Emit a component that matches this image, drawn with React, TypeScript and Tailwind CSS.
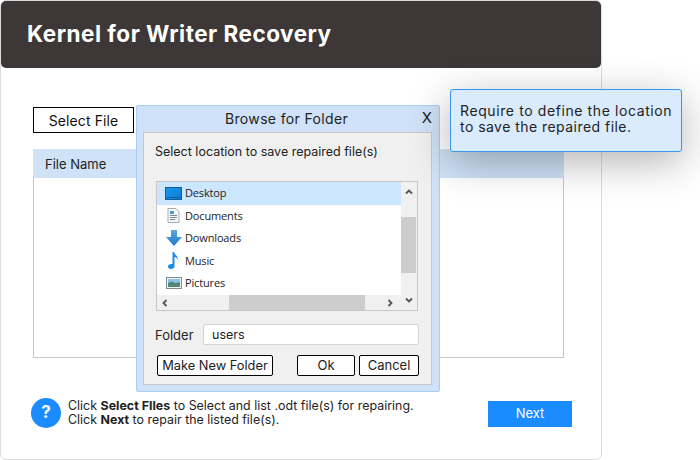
const font = { fontFamily: '"Inter", "Open Sans", sans-serif' };

function Row({ icon, label, active }: { icon: React.ReactNode; label: string; active?: boolean }) {
  return (
    <div className={`h-[22.5px] flex items-center pl-[7px] gap-[2px] ${active ? "bg-[#cde6ff]" : ""}`}>
      <span className="w-[19px] h-[18px] flex items-center justify-center shrink-0">{icon}</span>
      <span className="text-[11px] font-medium text-[#222] font-['Open_Sans',sans-serif] tracking-[-0.15px]">{label}</span>
    </div>
  );
}

const DesktopIcon = (
  <svg width="17" height="13" viewBox="0 0 17 13">
    <defs>
      <linearGradient id="dk" x1="0" y1="0" x2="1" y2="1">
        <stop offset="0" stopColor="#1b97ef" />
        <stop offset="1" stopColor="#0f78cf" />
      </linearGradient>
    </defs>
    <rect x="0.5" y="0.5" width="16" height="12" fill="url(#dk)" stroke="#0f5f9f" />
    <rect x="2" y="10" width="13" height="1" fill="#0c5c9c" />
  </svg>
);
const DocIcon = (
  <svg width="13" height="15" viewBox="0 0 13 15">
    <path d="M1 .5h8l3 3v11H1z" fill="#f4f6f8" stroke="#a3aeb8" />
    <rect x="3" y="3" width="4" height="3" fill="#4a9ad8" />
    <path d="M3 7.500h7M3 9.500h7M3 11.500h5" stroke="#7d8892" />
  </svg>
);
const DownIcon = (
  <svg width="16" height="16" viewBox="0 0 16 16">
    <defs>
      <linearGradient id="dn" x1="0" y1="0" x2="0" y2="1">
        <stop offset="0" stopColor="#5aa9e6" />
        <stop offset="1" stopColor="#1f78cc" />
      </linearGradient>
    </defs>
    <path d="M5 0h6v7h5l-8 9-8-9h5z" fill="url(#dn)" />
  </svg>
);
const MusicIcon = (
  <svg width="11" height="17" viewBox="0 0 11 17">
    <path d="M4.500 0h1.600c.3 3 4.400 3.600 3.600 8-.5-2-1.900-2.800-3.200-3v9c0 1.800-1.600 3-3.500 3C1.200 17 0 16 0 14.600c0-1.600 1.600-2.700 3.200-2.700.5 0 .9.100 1.300.2z" fill="#1b8be8" />
  </svg>
);
const PicIcon = (
  <svg width="16" height="12" viewBox="0 0 16 12">
    <rect x="0.500" y="0.500" width="15" height="11" fill="#eef2f5" stroke="#7f8b95" />
    <rect x="2" y="2" width="12" height="4" fill="#8cc3e8" />
    <path d="M2 6l4-1.500 3 1.500 5-1v5H2z" fill="#4f8a78" />
  </svg>
);

function Chevron({ d }: { d: "up" | "down" | "left" | "right" }) {
  const v = d === "up" || d === "down";
  const path = { up: "M1 6l4-4 4 4", down: "M1 2l4 4 4-4", left: "M6 1L2 5l4 4", right: "M2 1l4 4-4 4" }[d];
  return (
    <svg width={v ? 8 : 6} height={v ? 6 : 8} viewBox={v ? "0 0 10 8" : "0 0 8 10"}>
      <path d={path} fill="none" stroke="#555" strokeWidth="2.4" />
    </svg>
  );
}

export default function App() {
  return (
    <div className="w-[700px] h-[460px] bg-white relative overflow-hidden" style={font}>
      <div className="w-[602px] h-[460px] border border-[#dcdcdc] rounded-[6px] flex flex-col">
        <div className="h-[67px] bg-[#3d3837] rounded-[5px] flex items-center pl-[26px] shrink-0">
          <h1 className="text-[22.5px] font-bold text-white tracking-[0.5px] mb-[2px]">Kernel for Writer Recovery</h1>
        </div>
        <div className="pl-[32px] pt-[39px] flex flex-col items-start">
          <button className="w-[101px] h-[26px] border border-black bg-white text-[14px] text-[#111] tracking-[0.1px]">Select File</button>
          <div className="mt-[16px] w-[531px] h-[209px] border border-[#c4c8ce] border-t-0">
            <div className="h-[29px] bg-[#cfe2f7] flex items-center pl-[12px] text-[13px] text-[#222] ml-[-1px] mr-[-1px] pt-[2px]">File Name</div>
          </div>
          <div className="w-[541px] ml-[-2px] mt-[40px] flex items-center justify-between">
            <div className="flex items-center gap-[7px]">
              <div className="w-[30px] h-[30px] rounded-full bg-[#1a8cff] text-white font-bold text-[17px] flex items-center justify-center">?</div>
              <div className="text-[12.4px] leading-[14px] text-[#222] tracking-[0.02px]">
                <div>Click <b>Select FIles</b> to Select and list .odt file(s) for repairing.</div>
                <div className="tracking-[0.02px]">Click <b>Next</b> to repair the listed file(s).</div>
              </div>
            </div>
            <button className="w-[84px] h-[26px] bg-[#1a8cff] text-white text-[13px] mt-[2px]">Next</button>
          </div>
        </div>
      </div>

      {/* Browse dialog */}
      <div className="absolute left-[136px] top-[105px] w-[304px] h-[287px] bg-[#cfe2f7] border border-[#a9cdf0] rounded-[2px] flex flex-col">
        <div className="h-[26px] flex items-center relative shrink-0">
          <span className="w-full text-center text-[14px] text-[#222] pr-[3px] tracking-[0.35px] mb-[2px]">Browse for Folder</span>
          <span className="absolute right-[7px] top-[1px] text-[15px] text-[#222]">X</span>
        </div>
        <div className="mx-[6px] w-[289px] h-[253px] bg-[#f0f0f0] border border-[#c8c8c8] flex flex-col pl-[11px]">
          <p className="text-[12.5px] text-[#222] mt-[11px] leading-[16px]">Select location to save repaired file(s)</p>
          <div className="mt-[21px] ml-[1px] w-[262px] h-[130px] border border-[#c6c6c6] bg-white flex">
            <div className="flex-1 flex flex-col min-w-0">
              <div className="flex-1">
                <Row icon={DesktopIcon} label="Desktop" active />
                <Row icon={DocIcon} label="Documents" />
                <Row icon={DownIcon} label="Downloads" />
                <Row icon={MusicIcon} label="Music" />
                <Row icon={PicIcon} label="Pictures" />
              </div>
              <div className="h-[15px] bg-[#f0f0f0] flex items-center">
                <span className="w-[24px] pl-[5px] flex items-center"><Chevron d="left" /></span>
                <div className="w-[136px] h-full bg-[#cdcdcd] ml-[48px]" />
                <span className="ml-auto pr-[8px] flex items-center"><Chevron d="right" /></span>
              </div>
            </div>
            <div className="w-[16px] bg-[#f0f0f0] flex flex-col items-center justify-between py-[7px] relative">
              <Chevron d="up" />
              <Chevron d="down" />
              <div className="absolute left-0 top-[35px] w-[15px] h-[56px] bg-[#cdcdcd]" />
            </div>
          </div>
          <div className="flex items-center mt-[13px]">
            <span className="text-[13px] text-[#222] w-[48px] pt-[2px]">Folder</span>
            <div className="w-[216px] h-[21px] bg-white border border-[#d4d4d4] rounded-[2px] flex items-center pl-[8px] pt-[1px] text-[12.5px] text-[#222]">users</div>
          </div>
          <div className="flex mt-[9px] pl-[2px]">
            <button className="w-[116px] h-[21px] border border-black rounded-[2px] bg-white text-[12.8px] text-[#222]">Make New Folder</button>
            <button className="ml-[24px] w-[58px] h-[21px] border border-black rounded-[2px] bg-white text-[13px] text-[#222]">Ok</button>
            <button className="ml-[4px] w-[60px] h-[21px] border border-black rounded-[2px] bg-white text-[13px] text-[#222]">Cancel</button>
          </div>
        </div>
      </div>

      {/* Tooltip */}
      <div className="absolute left-[450px] top-[89px] w-[232px] h-[63px] bg-[#d9ebfd] border border-[#3a97ef] rounded-[3px] shadow-[0_10px_40px_rgba(0,0,0,0.3)] pl-[9px] pt-[13px] text-[14px] leading-[16px] text-[#222]">
        <div className="tracking-[0.6px]">Require to define the location</div>
        <div className="tracking-[0.46px]">to save the repaired file.</div>
      </div>
    </div>
  );
}
